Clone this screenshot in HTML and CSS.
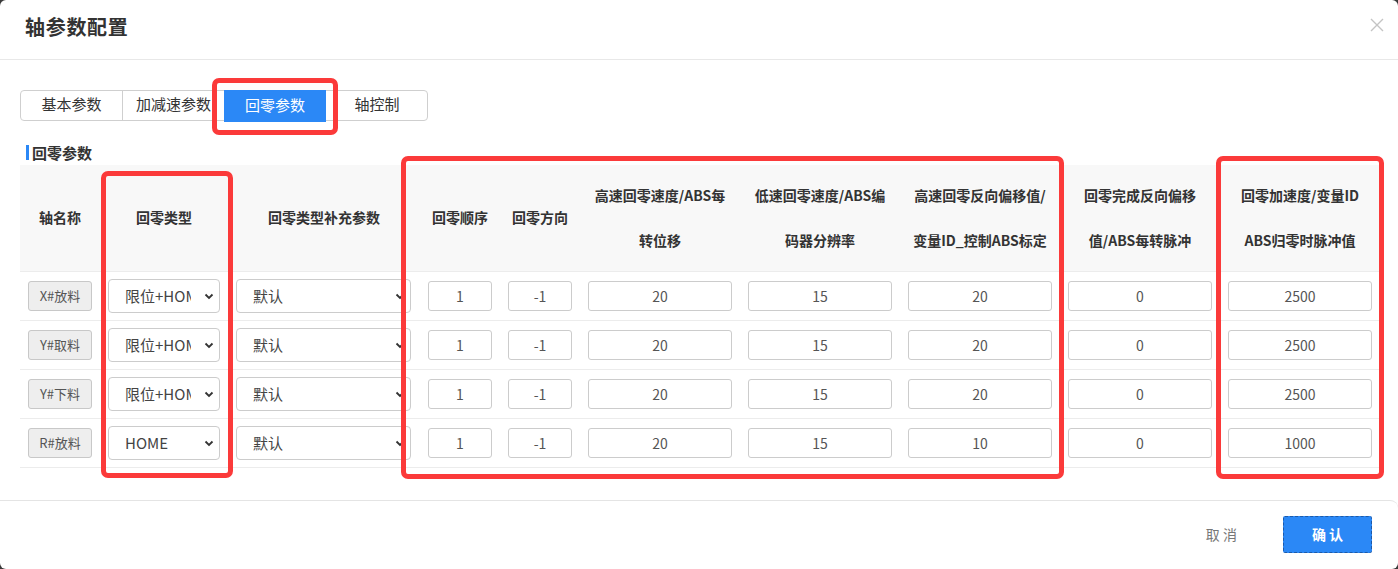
FILE: index.html
```html
<!DOCTYPE html>
<html lang="zh">
<head>
<meta charset="utf-8">
<title>轴参数配置</title>
<link rel="stylesheet" href="styles.css">
</head>
<body>
<div class="modal">
  <div class="modal-header">
    <h2 class="modal-title">轴参数配置</h2>
    <button class="close-btn" type="button" aria-label="关闭">
      <svg width="14" height="14" viewBox="0 0 14 14"><path d="M1 1L13 13M13 1L1 13" stroke="#c4c4c4" stroke-width="1.4" fill="none"/></svg>
    </button>
  </div>

  <div class="modal-body">
    <div class="tabs">
      <div class="tab">基本参数</div>
      <div class="tab tab-sep">加减速参数</div>
      <div class="tab tab-active">回零参数</div>
      <div class="tab">轴控制</div>
    </div>

    <div class="section-title">回零参数</div>

    <table class="grid">
      <colgroup>
        <col class="c80"><col class="c128"><col class="c192"><col class="c80"><col class="c80">
        <col class="c160"><col class="c160"><col class="c160"><col class="c160"><col class="c160">
      </colgroup>
      <thead>
        <tr>
          <th>轴名称</th>
          <th>回零类型</th>
          <th>回零类型补充参数</th>
          <th>回零顺序</th>
          <th>回零方向</th>
          <th>高速回零速度/ABS每<br>转位移</th>
          <th>低速回零速度/ABS编<br>码器分辨率</th>
          <th>高速回零反向偏移值/<br>变量ID_控制ABS标定</th>
          <th>回零完成反向偏移<br>值/ABS每转脉冲</th>
          <th>回零加速度/变量ID<br>ABS归零时脉冲值</th>
        </tr>
      </thead>
      <tbody>
        <tr>
          <td><span class="axis-tag">X#放料</span></td>
          <td><div class="sel-wrap sel-type"><select class="sel"><option>限位+HOME</option></select><svg class="chev" width="10" height="7" viewBox="0 0 10 7"><path d="M1.5 1.5L5 5L8.5 1.5" stroke="#333" stroke-width="1.8" fill="none"/></svg></div></td>
          <td><div class="sel-wrap sel-extra"><select class="sel"><option>默认</option></select><svg class="chev" width="10" height="7" viewBox="0 0 10 7"><path d="M1.5 1.5L5 5L8.5 1.5" stroke="#333" stroke-width="1.8" fill="none"/></svg></div></td>
          <td><input class="num" value="1"></td>
          <td><input class="num" value="-1"></td>
          <td><input class="num" value="20"></td>
          <td><input class="num" value="15"></td>
          <td><input class="num" value="20"></td>
          <td><input class="num" value="0"></td>
          <td><input class="num" value="2500"></td>
        </tr>
        <tr>
          <td><span class="axis-tag">Y#取料</span></td>
          <td><div class="sel-wrap sel-type"><select class="sel"><option>限位+HOME</option></select><svg class="chev" width="10" height="7" viewBox="0 0 10 7"><path d="M1.5 1.5L5 5L8.5 1.5" stroke="#333" stroke-width="1.8" fill="none"/></svg></div></td>
          <td><div class="sel-wrap sel-extra"><select class="sel"><option>默认</option></select><svg class="chev" width="10" height="7" viewBox="0 0 10 7"><path d="M1.5 1.5L5 5L8.5 1.5" stroke="#333" stroke-width="1.8" fill="none"/></svg></div></td>
          <td><input class="num" value="1"></td>
          <td><input class="num" value="-1"></td>
          <td><input class="num" value="20"></td>
          <td><input class="num" value="15"></td>
          <td><input class="num" value="20"></td>
          <td><input class="num" value="0"></td>
          <td><input class="num" value="2500"></td>
        </tr>
        <tr>
          <td><span class="axis-tag">Y#下料</span></td>
          <td><div class="sel-wrap sel-type"><select class="sel"><option>限位+HOME</option></select><svg class="chev" width="10" height="7" viewBox="0 0 10 7"><path d="M1.5 1.5L5 5L8.5 1.5" stroke="#333" stroke-width="1.8" fill="none"/></svg></div></td>
          <td><div class="sel-wrap sel-extra"><select class="sel"><option>默认</option></select><svg class="chev" width="10" height="7" viewBox="0 0 10 7"><path d="M1.5 1.5L5 5L8.5 1.5" stroke="#333" stroke-width="1.8" fill="none"/></svg></div></td>
          <td><input class="num" value="1"></td>
          <td><input class="num" value="-1"></td>
          <td><input class="num" value="20"></td>
          <td><input class="num" value="15"></td>
          <td><input class="num" value="20"></td>
          <td><input class="num" value="0"></td>
          <td><input class="num" value="2500"></td>
        </tr>
        <tr>
          <td><span class="axis-tag">R#放料</span></td>
          <td><div class="sel-wrap sel-type"><select class="sel"><option>HOME</option></select><svg class="chev" width="10" height="7" viewBox="0 0 10 7"><path d="M1.5 1.5L5 5L8.5 1.5" stroke="#333" stroke-width="1.8" fill="none"/></svg></div></td>
          <td><div class="sel-wrap sel-extra"><select class="sel"><option>默认</option></select><svg class="chev" width="10" height="7" viewBox="0 0 10 7"><path d="M1.5 1.5L5 5L8.5 1.5" stroke="#333" stroke-width="1.8" fill="none"/></svg></div></td>
          <td><input class="num" value="1"></td>
          <td><input class="num" value="-1"></td>
          <td><input class="num" value="20"></td>
          <td><input class="num" value="15"></td>
          <td><input class="num" value="10"></td>
          <td><input class="num" value="0"></td>
          <td><input class="num" value="1000"></td>
        </tr>
      </tbody>
    </table>
  </div>

  <div class="modal-footer">
    <button class="btn-cancel" type="button">取 消</button>
    <button class="btn-ok" type="button">确 认</button>
  </div>

  <div class="mark mark-tab"></div>
  <div class="mark mark-type"></div>
  <div class="mark mark-mid"></div>
  <div class="mark mark-right"></div>
</div>
</body>
</html>
```

FILE: styles.css
```css
* { box-sizing: border-box; }
html, body {
  margin: 0;
  padding: 0;
  background: #3a3a3a;
}
body {
  font-family: "Noto Sans CJK SC", "Noto Sans", sans-serif;
  color: #333;
}
.modal {
  position: relative;
  width: 1398px;
  height: 569px;
  background: #fff;
  border-radius: 6px;
  overflow: hidden;
  display: flex;
  flex-direction: column;
}
.modal-header {
  height: 60px;
  border-bottom: 1px solid #e8e8e8;
  display: flex;
  align-items: center;
  justify-content: space-between;
  padding: 0 14px 6px 25px;
  flex: none;
}
.modal-title {
  margin: 0;
  font-size: 20px;
  font-weight: 700;
  color: #333;
  letter-spacing: 0.7px;
}
.close-btn {
  border: 0;
  background: transparent;
  padding: 0;
  width: 14px;
  height: 14px;
  display: flex;
  margin-top: -4px;
}
.modal-body {
  flex: 1;
  padding: 31px 18px 0 20px;
}
.tabs {
  display: flex;
  width: 408px;
  height: 31px;
  border: 1px solid #cfcfcf;
  border-radius: 4px;
  margin-top: -1px;
}
.tab {
  width: 102px;
  display: flex;
  align-items: center;
  justify-content: center;
  font-size: 15px;
  color: #333;
  white-space: nowrap;
  flex: none;
  padding-bottom: 4px;
}
.tab:first-child { width: 101px; }
.tab-sep { border-left: 1px solid #cfcfcf; }
.tab-active {
  background: #2b88f6;
  color: #fff;
  margin-top: -1px;
  height: 32px;
}
.section-title {
  margin-top: 21px;
  height: 23px;
  display: flex;
  align-items: center;
  font-size: 15px;
  font-weight: 700;
  color: #333;
  padding-left: 7px;
  padding-bottom: 2px;
  line-height: 20px;
}
.section-title::before {
  content: "";
  width: 3px;
  height: 15px;
  background: #2b88f6;
  margin-right: 3px;
  margin-left: -1px;
}
.grid {
  width: 1360px;
  table-layout: fixed;
  border-collapse: collapse;
}
.c80 { width: 80px; }
.c128 { width: 128px; }
.c192 { width: 192px; }
.c160 { width: 160px; }
.grid th {
  background: #f8f8f8;
  height: 106px;
  padding: 0 8px;
  font-size: 14px;
  font-weight: 700;
  line-height: 45px;
  color: #333;
  text-align: center;
  border-bottom: 1px solid #ececec;
  white-space: nowrap;
}
.grid td {
  height: 49px;
  padding: 0 8px;
  border-bottom: 1px solid #ececec;
  text-align: center;
  vertical-align: middle;
}
.axis-tag {
  display: inline-flex;
  align-items: center;
  justify-content: center;
  width: 64px;
  height: 30px;
  background: #eeeeee;
  border: 1px solid #c8c8c8;
  border-radius: 3px;
  font-size: 13px;
  color: #555;
}
.sel-wrap {
  position: relative;
  height: 34px;
}
.sel-extra { width: 175px; }
.sel {
  -webkit-appearance: none;
  appearance: none;
  width: 100%;
  height: 34px;
  border: 1px solid #cccccc;
  border-radius: 4px;
  background: #fff;
  font-family: "Noto Sans CJK SC", "Noto Sans", sans-serif;
  font-size: 15px;
  color: #444;
  padding: 0 28px 0 16px;
  outline: none;
}
.chev {
  position: absolute;
  right: 6px;
  top: 14px;
  pointer-events: none;
}
.num {
  width: 100%;
  height: 30px;
  border: 1px solid #cccccc;
  border-radius: 3px;
  text-align: center;
  font-family: "Noto Sans CJK SC", "Noto Sans", sans-serif;
  font-size: 14px;
  color: #555;
  padding: 0;
  outline: none;
  display: block;
}
.modal-footer {
  height: 69px;
  flex: none;
  border-top: 1px solid #e4e4e4;
  border-top-right-radius: 8px;
  display: flex;
  align-items: center;
  justify-content: flex-end;
  padding: 0 26px 2px 0;
  gap: 40px;
}
.btn-cancel {
  border: 0;
  background: transparent;
  font-family: "Noto Sans CJK SC", "Noto Sans", sans-serif;
  font-size: 14px;
  color: #777;
  padding: 0 6px;
  height: 37px;
}
.btn-ok {
  width: 89px;
  height: 37px;
  background: #2b88f6;
  border: 1px dashed #1d5aa8;
  border-radius: 2px;
  color: #fff;
  font-family: "Noto Sans CJK SC", "Noto Sans", sans-serif;
  font-size: 14px;
  font-weight: 700;
}
.mark {
  position: absolute;
  border: 5px solid #fb3a3a;
  border-radius: 7px;
  pointer-events: none;
}
.mark-tab { left: 212px; top: 78px; width: 126px; height: 57px; }
.mark-type { left: 101px; top: 171px; width: 132px; height: 307px; }
.mark-mid { left: 401px; top: 156px; width: 663px; height: 323px; }
.mark-right { left: 1216px; top: 156px; width: 168px; height: 323px; }
```
